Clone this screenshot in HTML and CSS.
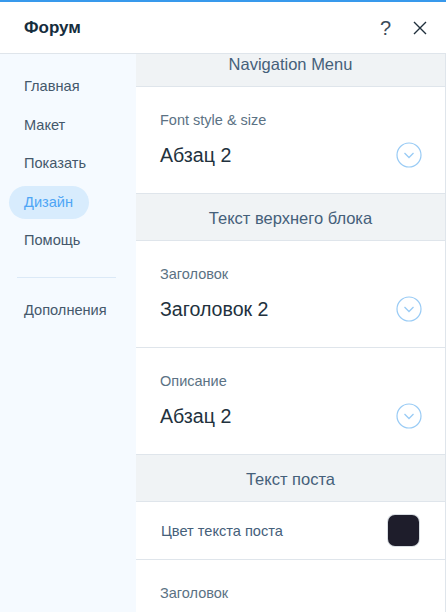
FILE: index.html
```html
<!DOCTYPE html>
<html lang="ru">

<head>
    <meta charset="UTF-8">
    <meta name="viewport" content="width=device-width, initial-scale=1.0">
    <title>Форум</title>
    <link rel="stylesheet" href="styles.css">
</head>

<body>
    <header class="topbar">
        <h1 class="title">Форум</h1>
        <div class="actions">
            <span class="help">?</span>
            <svg class="close" width="14" height="14" viewBox="0 0 14 14">
                <path d="M1 1 L13 13 M13 1 L1 13" stroke="#20303c" stroke-width="1.4" fill="none"/>
            </svg>
        </div>
    </header>

    <div class="panel">
        <nav class="sidebar">
            <ul class="menu">
                <li>Главная</li>
                <li>Макет</li>
                <li>Показать</li>
                <li class="active">Дизайн</li>
                <li>Помощь</li>
            </ul>
            <hr class="divider">
            <ul class="menu">
                <li>Дополнения</li>
            </ul>
        </nav>

        <main class="content">
            <!-- список прокручен на 14px -->
            <div class="scroll">
                <div class="section-title">Navigation Menu</div>

                <div class="field">
                    <div class="label">Font style &amp; size</div>
                    <div class="select">
                        <span>Абзац 2</span>
                        <svg class="chevron" width="26" height="26" viewBox="0 0 26 26">
                            <circle cx="13" cy="13" r="12" stroke="#99cbf5" stroke-width="1.2" fill="none"/>
                            <path d="M8.5 11 L13 15.5 L17.5 11" stroke="#99cbf5" stroke-width="1.3" fill="none"/>
                        </svg>
                    </div>
                </div>

                <div class="section-title">Текст верхнего блока</div>

                <div class="field">
                    <div class="label">Заголовок</div>
                    <div class="select">
                        <span>Заголовок 2</span>
                        <svg class="chevron" width="26" height="26" viewBox="0 0 26 26">
                            <circle cx="13" cy="13" r="12" stroke="#99cbf5" stroke-width="1.2" fill="none"/>
                            <path d="M8.5 11 L13 15.5 L17.5 11" stroke="#99cbf5" stroke-width="1.3" fill="none"/>
                        </svg>
                    </div>
                </div>

                <div class="field">
                    <div class="label">Описание</div>
                    <div class="select">
                        <span>Абзац 2</span>
                        <svg class="chevron" width="26" height="26" viewBox="0 0 26 26">
                            <circle cx="13" cy="13" r="12" stroke="#99cbf5" stroke-width="1.2" fill="none"/>
                            <path d="M8.5 11 L13 15.5 L17.5 11" stroke="#99cbf5" stroke-width="1.3" fill="none"/>
                        </svg>
                    </div>
                </div>

                <div class="section-title">Текст поста</div>

                <div class="color-row">
                    <span>Цвет текста поста</span>
                    <span class="swatch"></span>
                </div>

                <div class="field">
                    <div class="label">Заголовок</div>
                </div>
            </div>
        </main>
    </div>
</body>

</html>
```

FILE: styles.css
```css
body {
    margin: 0;
    height: 612px;
    overflow: hidden;
    background: #fff;
    font-family: "Liberation Sans", Arial, sans-serif;
    color: #20303c;
}

.topbar {
    box-sizing: border-box;
    height: 54px;
    border-top: 2px solid #3899ec;
    border-bottom: 1px solid #dfe5eb;
    display: flex;
    align-items: center;
    justify-content: space-between;
    padding: 0 19px 0 24px;
}

.title {
    margin: 0;
    font-size: 17px;
    font-weight: bold;
    color: #162d3d;
}

.actions {
    display: flex;
    align-items: center;
    gap: 22px;
}

.help {
    font-size: 20px;
    line-height: 1;
    color: #3a4b5a;
}

.panel {
    display: flex;
    height: 558px;
}

/* Левое меню */
.sidebar {
    width: 136px;
    flex-shrink: 0;
    background: #f5faff;
    padding-top: 16px;
    box-sizing: border-box;
}

.menu {
    list-style: none;
    margin: 0;
    padding: 0 0 0 9px;
    display: flex;
    flex-direction: column;
    gap: 5.5px;
}

.menu li {
    display: inline-block;
    align-self: flex-start;
    height: 33px;
    line-height: 33px;
    padding: 0 15px;
    border-radius: 17px;
    font-size: 14.6px;
    color: #44586b;
}

.menu li.active {
    width: 50px;
    background: #d8ecfd;
    color: #4ea5f5;
}

.divider {
    border: 0;
    border-top: 1px solid #dbe9f7;
    margin: 20px 20px 16px 17px;
}

/* Правая часть */
.content {
    width: 309px;
    border-right: 1px solid #dfe5eb;
    overflow: hidden;
}

.scroll {
    margin-top: -14px;
}

.section-title {
    height: 46px;
    line-height: 48px;
    background: #f0f3f5;
    border-bottom: 1px solid #dfe5eb;
    text-align: center;
    font-size: 16.5px;
    color: #45607a;
}

.field {
    height: 106px;
    box-sizing: content-box;
    border-bottom: 1px solid #dfe5eb;
    padding: 0 23px 0 24px;
}

.label {
    padding-top: 24px;
    font-size: 14.5px;
    line-height: 18px;
    color: #5b7284;
}

.select {
    margin-top: 14px;
    display: flex;
    align-items: center;
    justify-content: space-between;
    height: 24px;
    font-size: 19.6px;
    color: #22313d;
}

.chevron {
    display: block;
}

.color-row {
    height: 57px;
    border-bottom: 1px solid #dfe5eb;
    display: flex;
    align-items: center;
    justify-content: space-between;
    padding: 0 26px 0 25px;
    font-size: 14.6px;
    color: #45607a;
}

.swatch {
    width: 31px;
    height: 31px;
    border-radius: 7px;
    background: #1e1d2b;
    box-shadow: 0 0 0 1px #d8dde2;
}
```
